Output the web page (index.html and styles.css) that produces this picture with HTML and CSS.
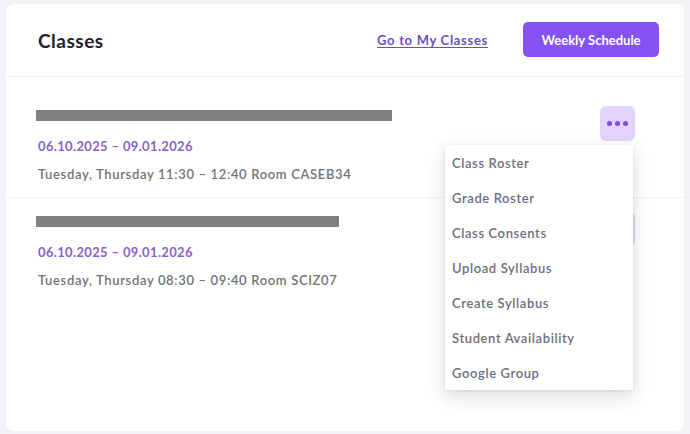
FILE: index.html
```html
<!DOCTYPE html>
<html lang="en">
<head>
<meta charset="utf-8">
<title>Classes</title>
<link rel="stylesheet" href="styles.css">
</head>
<body>
<main class="card">
  <header class="card-header">
    <h1 class="title">Classes</h1>
    <div class="actions">
      <a class="link" href="#">Go to My Classes</a>
      <button class="btn-primary" type="button">Weekly Schedule</button>
    </div>
  </header>
  <section class="list">
    <article class="row">
      <div class="row-info">
        <div class="redacted" style="width:356px"></div>
        <div class="dates">06.10.2025 – 09.01.2026</div>
        <div class="meta">Tuesday, Thursday 11:30 – 12:40 Room CASEB34</div>
      </div>
      <div class="menu-wrap">
        <button class="btn-dots" type="button" aria-label="More"><span></span><span></span><span></span></button>
        <ul class="menu">
          <li>Class Roster</li>
          <li>Grade Roster</li>
          <li>Class Consents</li>
          <li>Upload Syllabus</li>
          <li>Create Syllabus</li>
          <li>Student Availability</li>
          <li>Google Group</li>
        </ul>
      </div>
    </article>
    <article class="row">
      <div class="row-info">
        <div class="redacted" style="width:303px"></div>
        <div class="dates">06.10.2025 – 09.01.2026</div>
        <div class="meta">Tuesday, Thursday 08:30 – 09:40 Room SCIZ07</div>
      </div>
      <div class="menu-wrap">
        <button class="btn-dots" type="button" aria-label="More"><span></span><span></span><span></span></button>
      </div>
    </article>
  </section>
</main>
</body>
</html>
```
FILE: styles.css
```css
* { box-sizing: border-box; }
html, body { margin: 0; padding: 0; }
body {
  background: #f1f3f7;
  font-family: Lato, "Noto Sans", sans-serif;
  padding: 4px 6px 3px 6px;
  height: 434px;
  overflow: hidden;
}
.card {
  background: #fff;
  border-radius: 8px;
  height: 427px;
  position: relative;
}
.card-header {
  height: 73px;
  display: flex;
  align-items: center;
  justify-content: space-between;
  padding: 0 25px 0 32px;
  border-bottom: 1px solid #eef0f3;
}
.title {
  margin: 0;
  font-size: 19px;
  letter-spacing: 0.5px;
  font-weight: 700;
  color: #1e1e2c;
}
.actions {
  display: flex;
  align-items: center;
  gap: 35px;
}
.link {
  color: #6d4fc4;
  font-size: 13px;
  letter-spacing: 0.7px;
  font-weight: 700;
  text-decoration: underline;
  text-underline-offset: 2px;
}
.btn-primary {
  background: #8552f6;
  color: #fff;
  border: 0;
  border-radius: 5px;
  height: 35px;
  width: 136px;
  font-family: inherit;
  font-size: 13px;
  font-weight: 700;
  margin-top: -1px;
}
.list { padding-top: 15px; }
.row {
  display: flex;
  justify-content: space-between;
  align-items: flex-start;
  padding: 14px 49px 15px 30px;
  border-bottom: 1px solid #f0f1f4;
}
.row:last-child { border-bottom: 0; }
.redacted {
  height: 11px;
  background: #808080;
  margin-top: 4px;
}
.dates {
  margin-top: 17px;
  padding-left: 2px;
  line-height: 16px;
  font-size: 13px;
  letter-spacing: 0.35px;
  font-weight: 700;
  color: #8b5fcc;
}
.meta {
  margin-top: 12px;
  padding-left: 2px;
  line-height: 16px;
  font-size: 13px;
  letter-spacing: 0.65px;
  font-weight: 600;
  color: #737373;
}
.menu-wrap { position: relative; }
.btn-dots {
  width: 35px;
  height: 35px;
  border: 0;
  border-radius: 6px;
  background: #e4d4fc;
  display: flex;
  align-items: center;
  justify-content: center;
  gap: 3px;
  padding: 0;
}
.btn-dots span {
  width: 5px;
  height: 5px;
  border-radius: 50%;
  background: #7a4ee0;
}
.menu {
  position: absolute;
  top: 39px;
  right: 2px;
  width: 188px;
  margin: 0;
  padding: 0;
  list-style: none;
  background: #fff;
  box-shadow: 0 6px 18px rgba(30, 30, 60, 0.16), 0 1px 3px rgba(30, 30, 60, 0.08);
  z-index: 5;
}
.menu li {
  height: 35px;
  display: flex;
  align-items: center;
  padding-left: 7px;
  font-size: 13px;
  letter-spacing: 0.6px;
  font-weight: 600;
  color: #6e6e7e;
}
```
